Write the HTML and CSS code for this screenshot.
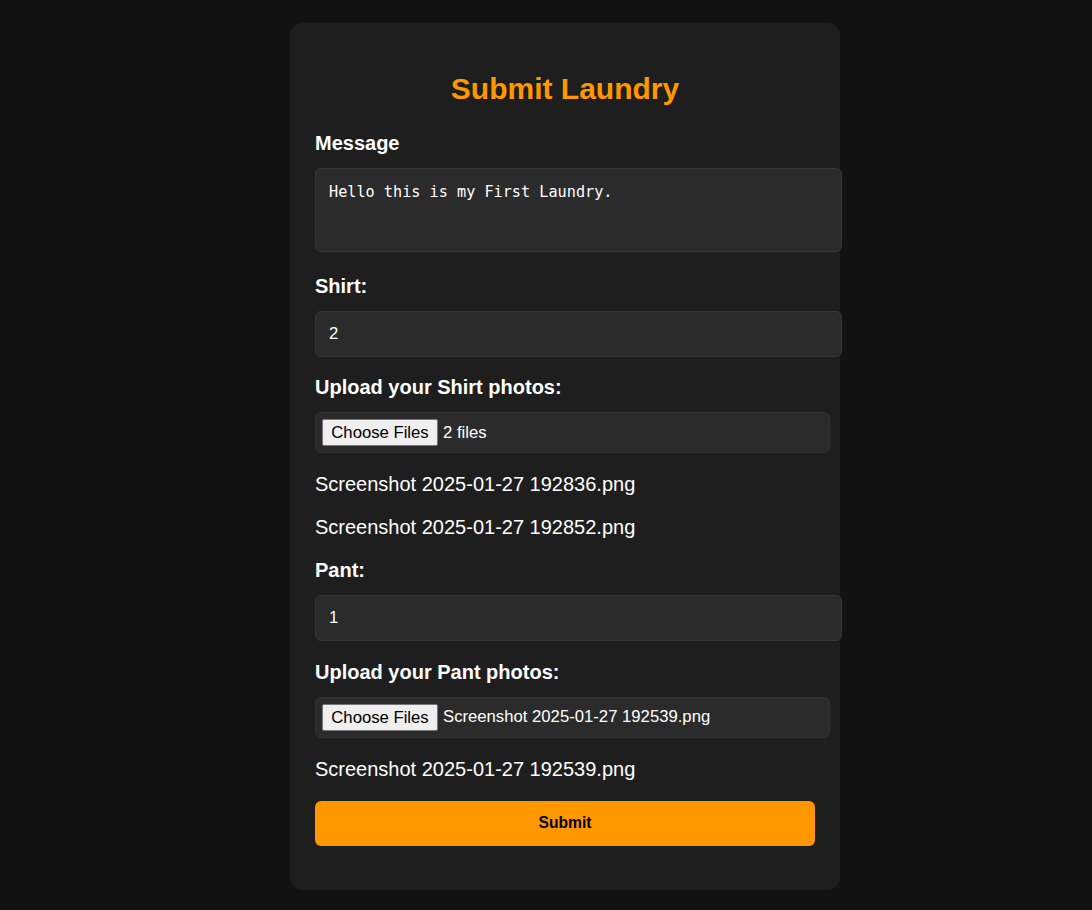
FILE: index.html
```html
<!DOCTYPE html>
<html lang="en">
<head>
<meta charset="utf-8">
<title>Submit Laundry</title>
<link rel="stylesheet" href="styles.css">
</head>
<body>
<div class="page">
  <form class="card" onsubmit="return false;">
    <h2 class="title">Submit Laundry</h2>

    <label class="label" for="message">Message</label>
    <textarea id="message" class="field textarea">Hello this is my First Laundry.</textarea>

    <label class="label" for="shirt">Shirt:</label>
    <input id="shirt" class="field input" type="number" value="2">

    <label class="label">Upload your Shirt photos:</label>
    <div class="file">
      <button type="button" class="file-btn">Choose Files</button>
      <span class="file-name">2 files</span>
    </div>
    <p class="file-item">Screenshot 2025-01-27 192836.png</p>
    <p class="file-item">Screenshot 2025-01-27 192852.png</p>

    <label class="label" for="pant">Pant:</label>
    <input id="pant" class="field input" type="number" value="1">

    <label class="label">Upload your Pant photos:</label>
    <div class="file">
      <button type="button" class="file-btn">Choose Files</button>
      <span class="file-name">Screenshot 2025-01-27 192539.png</span>
    </div>
    <p class="file-item">Screenshot 2025-01-27 192539.png</p>

    <button type="submit" class="submit">Submit</button>
  </form>
</div>
</body>
</html>
```
FILE: styles.css
```css
* { box-sizing: border-box; }

html, body {
  margin: 0;
  padding: 0;
  background: #121212;
  font-family: "Liberation Sans", Arial, sans-serif;
  color: #ffffff;
}

.page {
  display: flex;
  justify-content: center;
  padding: 23px 0 21px 38px;
}

.card {
  width: 550px;
  background: #1e1e1e;
  border-radius: 12.5px;
  padding: 25px 25px 25px 25px;
  display: flex;
  flex-direction: column;
  align-items: flex-start;
}

.title {
  align-self: stretch;
  text-align: center;
  color: #ff9800;
  font-size: 30px;
  font-weight: bold;
  line-height: 34.5px;
  margin: 24px 0 25px 0;
}

.label {
  display: block;
  font-size: 20px;
  font-weight: bold;
  line-height: 23px;
  margin: 0 0 13px 0;
  color: #ffffff;
}

.field {
  display: block;
  width: 527px;
  background: #2b2b2b;
  border: 1px solid #363636;
  border-radius: 6px;
  color: #ffffff;
  outline: none;
  margin: 0;
}

.textarea {
  height: 84px;
  padding: 14px 13px 12px 13px;
  font-family: "DejaVu Sans Mono", "Liberation Mono", monospace;
  font-size: 15.2px;
  line-height: 19px;
  resize: none;
  margin-bottom: 23px;
}

.input {
  height: 46px;
  padding: 0 13px;
  font-family: "Liberation Sans", Arial, sans-serif;
  font-size: 16.7px;
  margin-bottom: 19.5px;
}

.input::-webkit-inner-spin-button,
.input::-webkit-outer-spin-button {
  -webkit-appearance: none;
  margin: 0;
}

.file {
  width: 515px;
  height: 41px;
  background: #2b2b2b;
  border: 1px solid #333333;
  border-radius: 6px;
  padding: 6px 6px;
  display: flex;
  align-items: center;
  gap: 5px;
  margin-bottom: 20px;
}

.file-btn {
  height: 27px;
  width: 116px;
  padding: 0;
  background: #efefef;
  border: 1px solid #767676;
  border-radius: 2px;
  color: #000000;
  font-family: "Liberation Sans", Arial, sans-serif;
  font-size: 16.7px;
  line-height: 25px;
}

.file-name {
  font-size: 16.7px;
  color: #ffffff;
}

.file-item {
  margin: 0 0 20px 0;
  font-size: 20px;
  line-height: 23px;
  color: #ffffff;
}

.submit {
  width: 500px;
  height: 45px;
  margin: 0 0 19px 0;
  background: #ff9800;
  border: none;
  border-radius: 6px;
  color: #000000;
  font-family: "Liberation Sans", Arial, sans-serif;
  font-size: 15.6px;
  font-weight: bold;
  cursor: pointer;
}
```
